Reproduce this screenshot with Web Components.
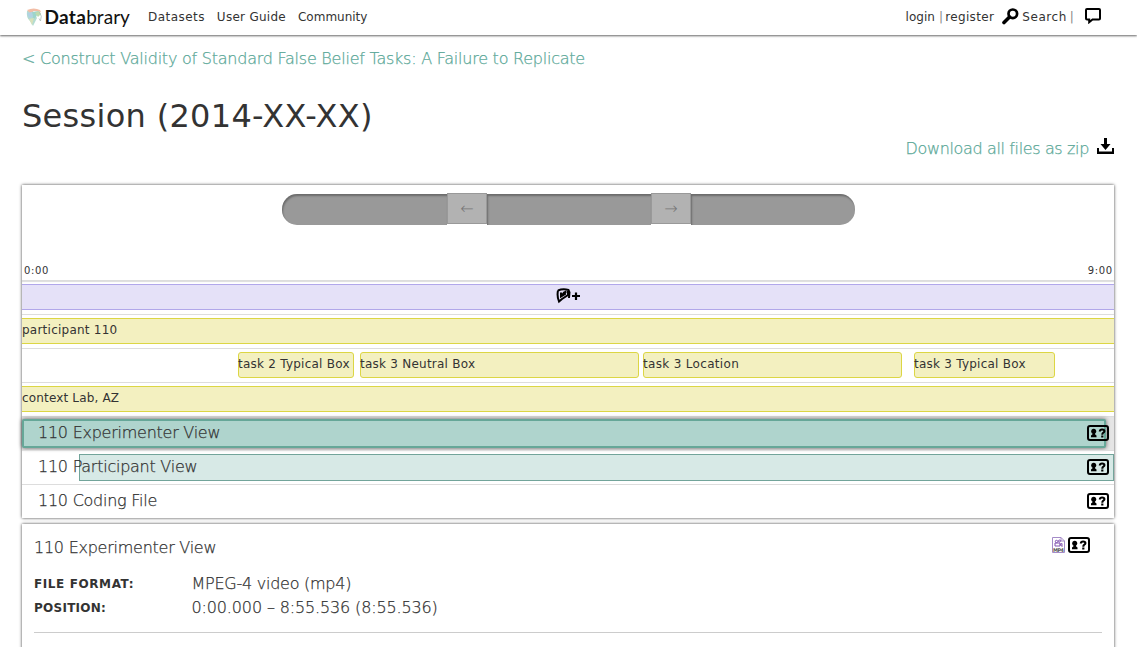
<!DOCTYPE html>
<html lang="en">
<head>
<meta charset="utf-8">
<title>Databrary</title>
<style>
body { margin: 0; background: #fff; color: #333; font: 12px "DejaVu Sans", sans-serif; letter-spacing: .24px; overflow: hidden; height: 647px; }
</style>
</head>
<body>
<db-app></db-app>
<script>
const define = (name, html) => customElements.define(name, class extends HTMLElement {
  constructor() {
    super();
    const t = document.createElement('template');
    t.innerHTML = html;
    this.attachShadow({ mode: 'open' }).append(t.content.cloneNode(true));
  }
});

define('db-logo', `<style>
:host { display: flex; align-items: flex-start; width: 106px; height: 24px; color: #111; }
svg { display: block; margin-top: 1px; }
.word { font: 19px/19px Lato, sans-serif; letter-spacing: .05px; margin-left: 1.500px; white-space: nowrap; }
b { font-weight: 700; letter-spacing: .3px; }
</style>
<svg width="17" height="18" viewBox="0 0 17 18">
<path d="M1 3Q0 10 4 13L7 18L11 10L6 2Z" fill="#b4dcd2"/><path d="M1 2Q8-1 14 2L15 4L8 3L4 5Z" fill="#f2bda6"/>
<path d="M6 4L13 3L10 9L7 12Z" fill="#9dd5cb"/><path d="M1 5L6 4L7 9L3 10Z" fill="#b1d2e2"/><path d="M3 11L8 10L6 17Z" fill="#d8e1ba"/>
<path d="M9 5l4-2 2 3-3 3Z" fill="#bddbb0"/><path d="M13.500 4Q16.500 8 14.500 13L13 10.500" fill="none" stroke="#a9bbb5" stroke-width=".8"/>
</svg><span class="word"><b>Data</b>brary</span>`);

define('db-header', `<style>
:host { display: flex; height: 35px; box-sizing: border-box; padding: 7px 35px 0 26px; background: #fff; box-shadow: 0 1px 2px rgba(0,0,0,.6); line-height: 20px; }
nav { display: flex; gap: 12px; margin-left: 16px; }
.user { display: flex; margin-left: auto; white-space: pre; letter-spacing: .1px; }
i { font-style: normal; color: #888; }
svg { display: block; }
</style>
<db-logo></db-logo>
<nav><span style="letter-spacing:.45px">Datasets</span><span style="letter-spacing:.27px">User Guide</span><span style="letter-spacing:0">Community</span></nav>
<div class="user"><span style="letter-spacing:.05px">login</span><i style="margin:0 2px 0 4px">|</i><span style="letter-spacing:.36px">register</span>
<svg width="17" height="17" viewBox="0 0 17 17" style="margin:1px 3px 0 8px"><circle cx="10.8" cy="5.8" r="4.300" fill="none" stroke="#000" stroke-width="2.7"/><path d="M7.5 9L2 14.500" stroke="#000" stroke-width="3.6" stroke-linecap="round"/></svg><span style="letter-spacing:.55px">Search</span><i style="margin:0 0 0 3px">|</i>
<svg width="18" height="17" viewBox="0 0 18 17" style="margin:0 0 0 10px"><path d="M3 2h12q1 0 1 1v8.500q0 1-1 1H8.500l-3.300 2.700v-2.700H3q-1 0-1-1V3q0-1 1-1Z" fill="none" stroke="#000" stroke-width="2"/></svg></div>`);

define('db-slider', `<style>
:host { display: flex; width: 573px; height: 31px; }
.seg { width: 164px; background: #999; box-shadow: inset 1px 2px 2px rgba(0,0,0,.3); }
.l { width: 165px; border-radius: 15px 0 0 15px; } .r { border-radius: 0 15px 15px 0; }
.btn { width: 40px; height: 31px; box-sizing: border-box; margin-top: -1px; border: 1px solid #999; background: #b2b2b2; display: flex; align-items: center; justify-content: center; color: #777; font-size: 16px; font-weight: 200; letter-spacing: 0; }
</style>
<div class="seg l"></div><div class="btn">←</div><div class="seg"></div><div class="btn">→</div><div class="seg r"></div>`);

define('db-release', `<style>:host { display: block; width: 22px; height: 16px; } svg { display: block; }</style>
<svg width="22" height="16" viewBox="0 0 22 16"><rect x="1" y="1" width="20" height="14" rx="2" fill="none" stroke="#000" stroke-width="2"/>
<circle cx="6.700" cy="6.200" r="2.500"/><path d="M4 12.300V10.500L5.500 9.300V8H8V9.300L9.500 10.500V12.300Z"/><path d="M12.800 6.500Q12.800 4.500 15.100 4.500Q17.400 4.500 17.400 6.200Q17.400 7 16.300 7.700Q15.300 8.300 15.300 9.700" fill="none" stroke="#000" stroke-width="2.100"/><path d="M14.200 10.500h2.200v2h-2.200Z"/></svg>`);

define('db-row', `<style>
:host { display: block; flex: none; height: 34px; box-sizing: border-box; border-top: 1px solid #ddd; padding-top: 3px; }
</style><slot></slot>`);

define('db-tag', `<style>
:host { display: block; box-sizing: border-box; height: 26px; background: #f3f0c0; border: 1px solid #dcd644; border-width: 1px 0; line-height: 22px; white-space: nowrap; }
:host([round]) { border-width: 1px; border-radius: 3px; text-indent: -1px; }
</style><slot></slot>`);

define('db-file', `<style>
:host { display: grid; flex: none; grid-template-columns: 1fr auto; height: 34px; box-sizing: border-box; border-top: 1px solid #ddd; padding: 3px 0 0; }
:host([active]) { background: #e5e5e5; }
.bar { grid-area: 1/1/2/3; height: 27px; box-sizing: border-box; background: #d7e9e6; border: 1px solid #72a49a; margin-left: var(--from, 0); margin-right: var(--to, 0); }
:host([empty]) .bar { visibility: hidden; }
:host([active]) .bar { background: #afd4cd; border: 2px solid #66a798; height: 29px; margin-top: -1px; box-shadow: 0 0 4px rgba(0,0,0,.6); border-radius: 2px; }
.name { grid-area: 1/1; z-index: 1; padding-left: 16px; font-size: 16px; font-weight: 200; letter-spacing: var(--ls); -webkit-text-stroke: .25px; line-height: 25px; }
db-release { grid-area: 1/2; z-index: 1; margin: 5px 5px 0 0; }
</style><div class="bar"></div><div class="name"><slot></slot></div><db-release></db-release>`);

define('db-timeline', `<style>
:host { display: flex; flex-direction: column; height: 333px; background: #fff; box-shadow: 0 0 3px rgba(0,0,0,.75); }
db-slider { margin: 9px auto 0 260px; }
.times { display: flex; justify-content: space-between; font-size: 10px; line-height: 14px; letter-spacing: .6px; padding: 0 2px; margin: 39px 0 2px; }
.add { height: 26px; box-sizing: border-box; background: #e5e1f8; border: 1px solid #b1a7ea; border-width: 1px 0; display: flex; justify-content: center; }
.add svg { display: block; margin-top: 3px; }
.tasks { display: flex; letter-spacing: .24px; }
.first { box-shadow: inset 0 1px 1px #ddd; }
</style>
<db-slider></db-slider>
<div class="times"><span>0:00</span><span style="margin-right:-.6px">9:00</span></div>
<db-row class="first"><div class="add"><svg width="24" height="16" viewBox="0 0 24 16"><path d="M2 2.500Q7 .3 12.500 2L13.500 4.500L13 10M2 2.500Q.8 8 3 13.500L6 11L12 7V3M5 8.500L8 4.500L10.500 3.500M5 4.500V8.500L10 5.500" fill="none" stroke="#000" stroke-width="2"/><path d="M16 8h8M20 4.500v7.500" stroke="#000" stroke-width="2.200"/></svg></div></db-row>
<db-row><db-tag>participant 110</db-tag></db-row>
<db-row><div class="tasks">
<db-tag round style="width:116px;margin-left:216px">task 2 Typical Box</db-tag>
<db-tag round style="width:279px;margin-left:6px">task 3 Neutral Box</db-tag>
<db-tag round style="width:259px;margin-left:4px;letter-spacing:.32px">task 3 Location</db-tag>
<db-tag round style="width:141px;margin-left:12px">task 3 Typical Box</db-tag></div></db-row>
<db-row><db-tag style="letter-spacing:.16px">context Lab, AZ</db-tag></db-row>
<db-file active style="--to:8px">110 Experimenter View</db-file>
<db-file style="--from:57px">110 Participant View</db-file>
<db-file empty>110 Coding File</db-file>`);

define('db-details', `<style>
:host { display: block; height: 140px; box-sizing: border-box; padding: 12px 12px 0; background: #fff; box-shadow: 0 0 3px rgba(0,0,0,.75); }
.top { display: flex; justify-content: space-between; font-size: 16px; font-weight: 200; letter-spacing: var(--ls); line-height: 24px; padding-right: 12px; }
.top span, dd { -webkit-text-stroke: .25px; }
.icons { display: flex; gap: 3px; padding-top: 1px; }
dl { display: grid; grid-template-columns: 158px 1fr; grid-auto-rows: 24px; line-height: 24px; margin: 12px 0 0; padding-bottom: 12px; border-bottom: 1px solid #ccc; }
dt { font-weight: 700; font-size: 12px; letter-spacing: .6px; }
dd { margin: 0 0 0 -.5px; font-size: 16px; font-weight: 200; letter-spacing: var(--ls); }
svg text { font: 700 5px "DejaVu Sans", sans-serif; letter-spacing: 0; }
</style>
<div class="top"><span>110 Experimenter View</span><div class="icons">
<svg width="13" height="16" viewBox="0 0 13 16"><path d="M.5.5H9L12.500 4V15.500H.5Z" fill="#fff" stroke="#a48bc8"/><path d="M9 .5V4H12.500" fill="none" stroke="#a48bc8"/><circle cx="4.500" cy="4.500" r="1.200" fill="none" stroke="#8052b0"/><circle cx="7.500" cy="4" r="1" fill="none" stroke="#8052b0"/><path d="M3 6h5v3H3ZM8 7.500l2-1v3Z" fill="none" stroke="#8052b0"/><text x="1" y="14.500" textLength="11" fill="#555">MP4</text></svg>
<db-release></db-release></div></div>
<dl><dt>FILE FORMAT:</dt><dd>MPEG-4 video (mp4)</dd><dt style="letter-spacing:.26px">POSITION:</dt><dd style="letter-spacing:-.14px">0:00.000 – 8:55.536 (8:55.536)</dd></dl>`);

define('db-app', `<style>
:host { display: block; --ls: -.25px; }
main { padding: 0 23px 0 22px; }
.crumb, .zip { color: #5ba898; font-size: 16px; font-weight: 200; line-height: 24px; letter-spacing: -.235px; -webkit-text-stroke: .25px; }
.crumb { padding-top: 12px; }
h1 { font-size: 32px; font-weight: 400; line-height: 40px; letter-spacing: .3px; margin: 25px 0 0; }
.zip { display: flex; justify-content: flex-end; gap: 8px; height: 24px; margin-bottom: 24px; padding-top: 1px; letter-spacing: -.36px; }
.zip svg { display: block; margin-top: 1px; }
db-details { margin-top: 6px; }
</style>
<db-header></db-header>
<main>
<div class="crumb">&lt; Construct Validity of Standard False Belief Tasks: A Failure to Replicate</div>
<h1>Session (2014-XX-XX)</h1>
<div class="zip"><span>Download all files as zip</span><svg width="17" height="17" viewBox="0 0 17 17"><path d="M7 0h3v6h3.500L8.500 12L3.500 6H7ZM0 10h2v3.500h13V10h2v6H0Z" fill="#000"/></svg></div>
<db-timeline></db-timeline>
<db-details></db-details>
</main>`);
</script>
</body>
</html>
